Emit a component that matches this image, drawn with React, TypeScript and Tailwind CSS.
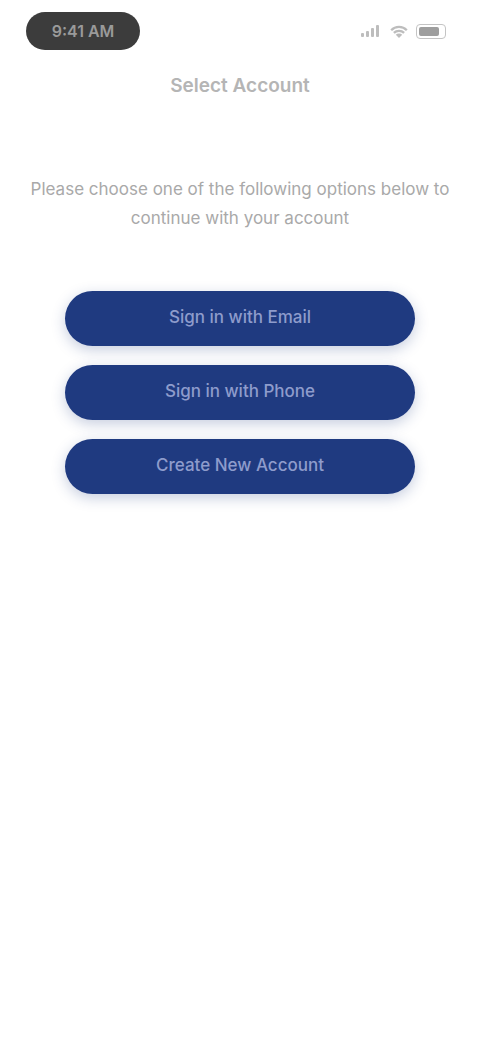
import React from "react";

export default function App() {
  return (
    <div className="min-h-[1040px] w-[480px] bg-white" style={{ fontFamily: '"Inter", "Liberation Sans", sans-serif' }}>
      <div className="flex items-center justify-between px-[26px] pt-[12px]">
        <div className="flex h-[38px] w-[114px] items-center justify-center rounded-full bg-[#3c3c3c] text-[16px] font-semibold text-[#9a9a9a]">
          9:41 AM
        </div>
        <div className="flex items-center gap-[7px] pr-[8px] text-[#bdbdbd]">
          <svg width="22" height="12" viewBox="0 0 20 12" fill="currentColor">
            <rect x="0" y="8" width="3" height="4" rx="1" />
            <rect x="5" y="6" width="3" height="6" rx="1" />
            <rect x="10" y="3" width="3" height="9" rx="1" />
            <rect x="15" y="0" width="3" height="12" rx="1" />
          </svg>
          <svg width="20" height="14" viewBox="0 0 18 13" fill="currentColor">
            <path d="M9 13l-3-3a4.2 4.2 0 016 0zM3.5 7.5a7.8 7.8 0 0111 0L13 9a5.6 5.6 0 00-8 0zM1 5a11.3 11.3 0 0116 0l-1.5 1.5a9.2 9.2 0 00-13 0z" />
          </svg>
          <div className="flex h-[15px] w-[30px] items-center rounded-[4px] border border-[#c4c4c4] p-[2px]">
            <div className="h-full w-[20px] rounded-[2px] bg-[#9e9e9e]" />
          </div>
        </div>
      </div>

      <div className="mt-[22px] text-center text-[19px] font-semibold text-[#b5b5b5]">
        Select Account
      </div>

      <p className="mx-auto mt-[74px] w-[440px] text-center text-[17px] leading-[29px] text-[#a9a9a9]">
        Please choose one of the following options below to continue with your account
      </p>

      <div className="mx-auto mt-[58px] flex w-[350px] flex-col gap-[19px]">
        {["Sign in with Email", "Sign in with Phone", "Create New Account"].map((t) => (
          <button
            key={t}
            className="flex h-[55px] w-full items-center justify-center rounded-full bg-[#1f3a80] text-[17px] font-medium text-[#8e9ccc] shadow-[0_4px_14px_rgba(31,58,128,0.25)]"
          >
            {t}
          </button>
        ))}
      </div>
    </div>
  );
}
